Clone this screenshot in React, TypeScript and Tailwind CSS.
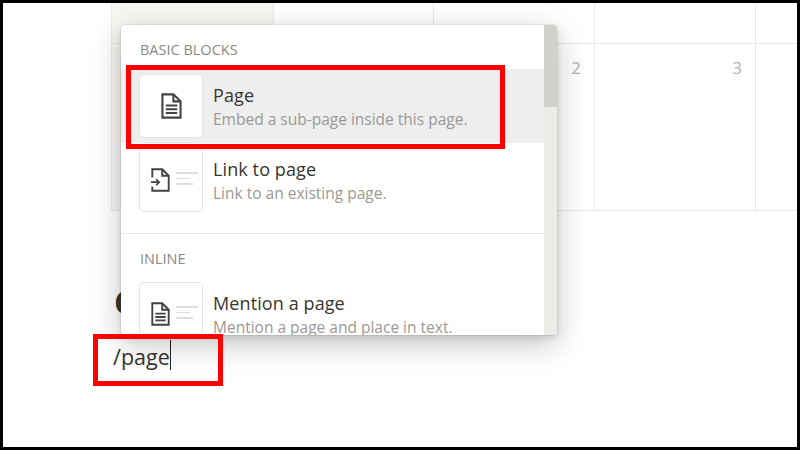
import React from "react";

const font = { fontFamily: '"Open Sans","Noto Sans",sans-serif' };

function PageGlyph({ link = false, small = false }: { link?: boolean; small?: boolean }) {
  return (
    <svg width={small ? 19 : 21} height={small ? 24 : 26} viewBox="0 0 22 28" preserveAspectRatio="none" fill="none" stroke="#444340" strokeWidth="2.2">
      {link ? (
        <>
          <path d="M1.5 11V1.5H13L20.5 9V26.5H1.5V22" />
          <path d="M13 1.5V9H20.5" />
          <path d="M0 16.5H9M6 13l3.5 3.5L6 20" strokeWidth="1.8" />
        </>
      ) : (
        <>
          <path d="M1.5 1.5H13L20.5 9V26.5H1.5Z" />
          <path d="M13 1.5V9H20.5" />
          <path d="M5 13.5H17M5 17.5H17M5 21.5H17" />
        </>
      )}
    </svg>
  );
}

function Lines() {
  return (
    <div className="flex flex-col gap-[4px] w-[22px] -mt-[3px]">
      <div className="h-[1.5px] w-[22px] bg-[#dfdedc]" />
      <div className="h-[1.5px] w-[14px] bg-[#dfdedc]" />
      <div className="h-[1.5px] w-[17px] bg-[#dfdedc]" />
    </div>
  );
}

function Item({ title, sub, active, link, lines, className = "" }: { title: string; sub: string; active?: boolean; link?: boolean; lines?: boolean; className?: string }) {
  return (
    <div className={`flex items-start h-[74px] shrink-0 pl-[18px] pt-[5px] ${active ? "bg-[#eeeeee]" : ""} ${className}`}>
      <div className={`w-[64px] h-[64px] shrink-0 rounded-[5px] bg-white border border-[#e4e4e2] flex items-center justify-center gap-[6px] ${lines ? "pl-[6px]" : ""}`}>
        <PageGlyph link={link} small={lines} />
        {lines && <Lines />}
      </div>
      <div className="ml-[10px] flex flex-col">
        <div className="text-[18px] leading-[24px] mt-[9px] text-[#37352f] tracking-[0.1px]">{title}</div>
        <div className="text-[15.5px] leading-[22px] mt-[1px] text-[#9a9996]">{sub}</div>
      </div>
    </div>
  );
}

export default function App() {
  return (
    <div style={font} className="relative w-[800px] h-[450px] bg-white border-[3px] border-black overflow-hidden">
      <div className="ml-[108px] w-[700px] grid grid-cols-[162px_160px_161px_161px_56px] grid-rows-[41px_166px] border-b border-[#e9e9e7] border-l">
        <div className="bg-[#f7f6f3] border-r border-b border-[#e9e9e7]" />
        <div className="border-r border-b border-[#e9e9e7]" />
        <div className="border-r border-b border-[#e9e9e7]" />
        <div className="border-r border-b border-[#e9e9e7]" />
        <div className="border-b border-[#e9e9e7]" />
        <div className="bg-[#f7f6f3] border-r border-[#e9e9e7]" />
        <div className="border-r border-[#e9e9e7]" />
        <div className="border-r border-[#e9e9e7] text-right pr-[13px] pt-[11px] text-[17px] leading-[26px] text-[#b3b2af]">2</div>
        <div className="border-r border-[#e9e9e7] text-right pr-[13px] pt-[11px] text-[17px] leading-[26px] text-[#b3b2af]">3</div>
        <div />
      </div>

      <div className="ml-[111px] mt-[68px] h-[46px] text-[32px] leading-[46px] font-bold text-[#37352f]">C</div>
      <div className="ml-[110px] mt-[16px] flex items-start h-[40px] text-[21.5px] leading-[32px] text-[#37352f]">
        <span>/page</span>
        <span className="w-[1.5px] h-[30px] -mt-[1px] bg-[#222]" />
      </div>

      {/* Slash menu */}
      <div className="absolute left-[118px] top-[22px] w-[436px] h-[310px] bg-white rounded-[4px] overflow-hidden flex shadow-[0_0_0_1px_rgba(15,15,15,0.05),0_3px_6px_rgba(15,15,15,0.1),0_9px_30px_rgba(15,15,15,0.25)]">
        <div className="flex-1 flex flex-col overflow-hidden">
          <div className="h-[44px] shrink-0 pl-[19px] pt-[15px] text-[14.5px] leading-[20px] text-[#8a8985]">BASIC BLOCKS</div>
          <Item title="Page" sub="Embed a sub-page inside this page." active />
          <Item title="Link to page" sub="Link to an existing page." link lines />
          <div className="h-[1px] shrink-0 mt-[16px] bg-[#e9e9e7]" />
          <div className="h-[43px] shrink-0 pl-[19px] pt-[15px] text-[14.5px] leading-[20px] text-[#8a8985]">INLINE</div>
          <Item title="Mention a page" sub="Mention a page and place in text." lines />
        </div>
        <div className="w-[13px] bg-[#edece9]">
          <div className="h-[82px] bg-[#d3d1cb]" />
        </div>
      </div>

      {/* Annotations */}
      <div className="absolute left-[123px] top-[62px] w-[379px] h-[84px] border-[5px] border-[#ff0000]" />
      <div className="absolute left-[90px] top-[331px] w-[130px] h-[52px] border-[5px] border-[#ff0000]" />
    </div>
  );
}
